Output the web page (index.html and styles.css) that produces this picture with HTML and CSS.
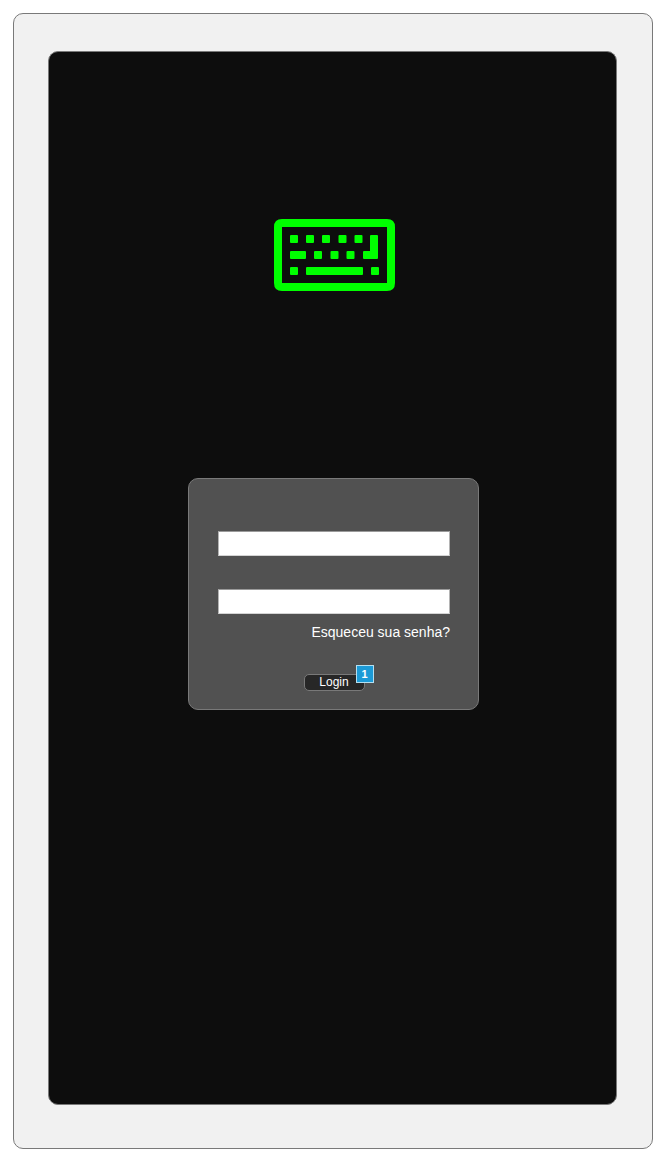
FILE: index.html
```html
<!DOCTYPE html>
<html lang="pt-BR">
<head>
<meta charset="utf-8">
<meta name="viewport" content="width=device-width, initial-scale=1">
<title>Login</title>
<link rel="stylesheet" href="styles.css">
</head>
<body class="page">
<div class="frame">
  <main class="screen">
    <svg class="logo" viewBox="0 0 121 72" role="img" aria-label="Teclado" fill="#00ff00">
      <path fill-rule="evenodd" d="M8 0H113Q121 0 121 8V64Q121 72 113 72H8Q0 72 0 64V8Q0 0 8 0ZM8 8V64H113V8Z"/>
      <rect x="16" y="16" width="8" height="8" rx="1"/>
      <rect x="32" y="16" width="8" height="8" rx="1"/>
      <rect x="48" y="16" width="8" height="8" rx="1"/>
      <rect x="64.500" y="16" width="8" height="8" rx="1"/>
      <rect x="80.500" y="16" width="8" height="8" rx="1"/>
      <path d="M97 16H103Q104 16 104 17V39Q104 40 103 40H90Q89 40 89 39V33Q89 32 90 32H96V17Q96 16 97 16Z"/>
      <rect x="16" y="32" width="16" height="8" rx="1"/>
      <rect x="40" y="32" width="8" height="8" rx="1"/>
      <rect x="56.500" y="32" width="8" height="8" rx="1"/>
      <rect x="72.500" y="32" width="8" height="8" rx="1"/>
      <rect x="16" y="48" width="8" height="8" rx="1"/>
      <rect x="32" y="48" width="57" height="8" rx="1"/>
      <rect x="97" y="48" width="8" height="8" rx="1"/>
    </svg>
    <form class="card">
      <input class="field" type="text" name="usuario" aria-label="Usuário">
      <input class="field" type="password" name="senha" aria-label="Senha">
      <a class="forgot" href="#senha">Esqueceu sua senha?</a>
      <div class="action">
        <button class="login" type="submit">Login</button>
        <span class="badge">1</span>
      </div>
    </form>
  </main>
</div>
</body>
</html>
```
FILE: styles.css
```css
* {
  box-sizing: border-box;
}

.page {
  display: flex;
  min-height: 100vh;
  margin: 0;
  padding: 13px 0 0 13px;
  background: #fff;
  font-family: "Liberation Sans", Arial, sans-serif;
}

.frame {
  display: flex;
  flex: 1;
  padding: 37px 35px 43px 34px;
  border: 1px solid #797979;
  border-radius: 10px;
  background: #f1f1f1;
}

.screen {
  display: flex;
  flex: 1;
  flex-direction: column;
  align-items: center;
  gap: 187px;
  padding: 167px 0 167px 2px;
  border: 1px solid #797979;
  border-radius: 10px;
  background: #0d0d0d;
}

.logo {
  width: 121px;
  height: 72px;
  margin-left: 2px;
}

.card {
  display: flex;
  flex-direction: column;
  width: 291px;
  max-width: 100%;
  padding: 52px 28px 18px 29px;
  border: 1px solid #797979;
  border-radius: 10px;
  background: #515151;
}

.field {
  width: 100%;
  height: 25px;
  margin: 0;
  padding: 2px 4px;
  border: 1px solid;
  border-color: #9a9a9a #b4b4b4 #d4d4d4;
  border-radius: 0;
  background: #fff;
  font: 13px/16px "Liberation Sans", Arial, sans-serif;
}

.field + .field {
  margin-top: 33px;
}

.forgot {
  align-self: flex-end;
  margin-top: 10px;
  color: #fff;
  font-size: 14px;
  line-height: 16px;
  text-decoration: none;
}

.action {
  position: relative;
  align-self: center;
  display: flex;
  margin-top: 34px;
}

.login {
  width: 61px;
  height: 17px;
  padding: 0;
  border: 1px solid #797979;
  border-radius: 5px;
  background: #272727;
  color: #fff;
  font: 12px/15px "Liberation Sans", Arial, sans-serif;
}

.badge {
  position: absolute;
  top: -9px;
  right: -9px;
  width: 18px;
  height: 18px;
  border: 1px solid #b5dff0;
  background: #1c9ad6;
  color: #fff;
  font-size: 11px;
  font-weight: bold;
  line-height: 16px;
  text-align: center;
}
```
